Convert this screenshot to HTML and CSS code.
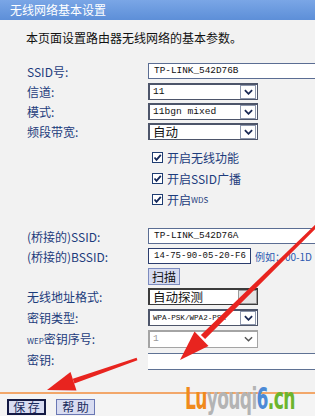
FILE: index.html
```html
<!DOCTYPE html>
<html lang="zh-CN">
<head>
<meta charset="UTF-8">
<title>无线网络基本设置</title>
<link rel="stylesheet" href="styles.css">
</head>
<body>

<div class="page">
    <div class="title">无线网络基本设置</div>
    <p class="intro">本页面设置路由器无线网络的基本参数。</p>

    <div class="form">
        <div class="row">
            <span class="lbl">SSID号:</span>
            <span class="field long">TP-LINK_542D76B</span>
        </div>
        <div class="row">
            <span class="lbl">信道:</span>
            <div class="sel"><span class="txt mono">11</span><span class="btn"><svg viewBox="0 0 10 6"><path d="M1 1 L5 5 L9 1"/></svg></span></div>
        </div>
        <div class="row">
            <span class="lbl">模式:</span>
            <div class="sel"><span class="txt mono">11bgn mixed</span><span class="btn"><svg viewBox="0 0 10 6"><path d="M1 1 L5 5 L9 1"/></svg></span></div>
        </div>
        <div class="row">
            <span class="lbl">频段带宽:</span>
            <div class="sel"><span class="txt cjk">自动</span><span class="btn"><svg viewBox="0 0 10 6"><path d="M1 1 L5 5 L9 1"/></svg></span></div>
        </div>

        <div class="checks">
            <label class="chk"><span class="box"><svg viewBox="0 0 9 9"><path d="M1.5 4.5 L3.5 6.8 L7.8 1.8"/></svg></span>开启无线功能</label>
            <label class="chk"><span class="box"><svg viewBox="0 0 9 9"><path d="M1.5 4.5 L3.5 6.8 L7.8 1.8"/></svg></span>开启SSID广播</label>
            <label class="chk"><span class="box"><svg viewBox="0 0 9 9"><path d="M1.5 4.5 L3.5 6.8 L7.8 1.8"/></svg></span>开启<small>WDS</small></label>
        </div>

        <div class="row">
            <span class="lbl">(桥接的)SSID:</span>
            <span class="field long">TP-LINK_542D76A</span>
        </div>
        <div class="row">
            <span class="lbl">(桥接的)BSSID:</span>
            <span class="field short dark">14-75-90-05-20-F6</span>
            <span class="hint">例如：00-1D</span>
        </div>
        <div class="row">
            <span class="lbl"></span>
            <span class="scan">扫描</span>
        </div>
        <div class="row tall">
            <span class="lbl">无线地址格式:</span>
            <div class="sel heavy"><span class="txt cjk">自动探测</span><span class="btn blank"></span></div>
        </div>
        <div class="row tall">
            <span class="lbl">密钥类型:</span>
            <div class="sel"><span class="txt tiny">WPA-PSK/WPA2-PSK</span><span class="btn"><svg viewBox="0 0 10 6"><path d="M1 1 L5 5 L9 1"/></svg></span></div>
        </div>
        <div class="row tall">
            <span class="lbl"><small>WEP</small>密钥序号:</span>
            <div class="sel off"><span class="txt mono">1</span><span class="btn plain"><svg viewBox="0 0 10 6"><path d="M1 1 L5 5 L9 1"/></svg></span></div>
        </div>
        <div class="row tall">
            <span class="lbl">密钥:</span>
            <span class="keyfield"></span>
        </div>
    </div>

    <div class="footer">
        <span class="fbtn active">保 存</span>
        <span class="fbtn">帮 助</span>
    </div>

    <div class="mark"><span class="m-or">Lu</span><span class="m-gr">youqi</span><span class="m-bl">6</span><span class="m-gn">.cn</span></div>

    <svg class="arrows" viewBox="0 0 315 416">
        <polygon points="317.1,227.1 314.9,224.9 200.9,334.9 205.1,339.1"/>
        <polygon points="180,360 208.5,346 194.5,331.5"/>
        <polygon points="137.4,360.2 136.6,357.8 72.8,378.8 74.4,383.6"/>
        <polygon points="47,390 76.5,390.5 70.5,372"/>
    </svg>
</div>

</body>
</html>
```

FILE: styles.css
```css
/* router settings page */
body {
    margin: 0;
    background: #f2f2f2;
    font-family: "Noto Sans CJK SC", sans-serif;
    font-size: 12px;
}
.page {
    position: relative;
    width: 315px;
    height: 416px;
    overflow: hidden;
}
.title {
    height: 20px;
    line-height: 20px;
    padding-left: 10px;
    color: #fff;
    background: linear-gradient(#7aa6e6, #5d8fd8);
}
.intro {
    margin: 11px 0 0 26px;
    height: 14px;
    line-height: 14px;
    color: #111;
}
.form {
    margin-top: 16px;
}
.row {
    display: flex;
    align-items: center;
    height: 20px;
    white-space: nowrap;
}
.row.tall {
    height: 21px;
}
.lbl {
    flex: none;
    width: 121px;
    padding-left: 27px;
    color: #1d3c7c;
}
.lbl small, .chk small {
    font-size: 8px;
}
.field {
    flex: none;
    box-sizing: border-box;
    height: 16px;
    line-height: 14px;
    padding-left: 5px;
    background: #fff;
    border: 1px solid #5b6d93;
    font-family: "Liberation Mono", monospace;
    font-size: 9.4px;
    color: #111;
}
.field.long {
    width: 190px;
}
.field.short {
    width: 103px;
    font-size: 9px;
}
.field.dark {
    border-color: #2b3d6e;
}
.hint {
    margin-left: 4px;
    font-size: 10px;
    color: #2a58b0;
}
.sel {
    flex: none;
    display: flex;
    box-sizing: border-box;
    width: 110px;
    height: 17px;
    background: #fff;
    border: 1px solid #4d556a;
    border-width: 2px 1px 1px 2px;
}
.sel .txt {
    flex: 1;
    padding-left: 3px;
    line-height: 14px;
    color: #111;
}
.mono {
    font-family: "Liberation Mono", monospace;
    font-size: 9.6px;
}
.sel .txt.cjk {
    font-size: 12.5px;
    line-height: 13px;
}
.sel .txt.tiny {
    overflow: hidden;
    font-family: "Liberation Mono", monospace;
    font-size: 7.6px;
}
.sel .btn {
    flex: none;
    display: flex;
    align-items: center;
    justify-content: center;
    box-sizing: border-box;
    width: 16px;
    height: 14px;
    margin-right: 1px;
    border: 1px solid #8c96ac;
    background: #fff;
}
.sel .btn svg {
    width: 9px;
    height: 6px;
    fill: none;
    stroke: #1b2a55;
    stroke-width: 2;
}
.sel.heavy {
    border-color: #3b3b3b;
}
.sel .btn.blank {
    width: 19px;
    margin-right: 0;
    background: #e4e4e4;
    border-color: #9a9a9a;
}
.sel.off {
    height: 18px;
    border-color: #a4a4a4;
}
.sel.off .txt {
    color: #9a9a9a;
}
.sel .btn.plain {
    border: none;
}
.sel .btn.plain svg {
    stroke: #555;
    stroke-width: 1.6;
}
.checks {
    margin: 6px 0 16px 152px;
}
.chk {
    display: flex;
    align-items: center;
    height: 21px;
    color: #1d3c7c;
}
.box {
    display: flex;
    box-sizing: border-box;
    width: 11px;
    height: 11px;
    margin-right: 4px;
    background: #fff;
    border: 1px solid #1f3d72;
}
.box svg {
    width: 9px;
    height: 9px;
    fill: none;
    stroke: #14285a;
    stroke-width: 1.8;
}
.scan {
    box-sizing: border-box;
    height: 17px;
    line-height: 15px;
    padding: 0 3px;
    margin-top: 1px;
    background: #d6dbf0;
    border: 1px solid #7c8bbf;
    color: #111;
}
.keyfield {
    flex: none;
    box-sizing: border-box;
    width: 170px;
    height: 17px;
    margin-top: 3px;
    background: #fff;
    border-top: 1px solid #5f7294;
    border-bottom: 1px solid #5f7294;
}
.footer {
    position: absolute;
    left: 0;
    right: 0;
    top: 392px;
    bottom: 0;
    display: flex;
    gap: 10px;
    padding: 5px 0 0 7px;
    border-top: 2px solid #f2a76a;
    background: #f4f4f4;
}
.fbtn {
    box-sizing: border-box;
    width: 39px;
    height: 16px;
    line-height: 14px;
    text-align: center;
    background: #d8dcf1;
    border: 1px solid #6a78b4;
    color: #1a2a5c;
}
.fbtn.active {
    border: 2px solid #141a44;
    line-height: 12px;
}
.mark {
    position: absolute;
    left: 185px;
    top: 381px;
    font-family: "DejaVu Sans Condensed", "DejaVu Sans", sans-serif;
    font-weight: bold;
    font-size: 28px;
    letter-spacing: -1px;
    transform: scale(0.68, 1.08);
    transform-origin: left top;
}
.m-or { color: #f08a1c; }
.m-gr { color: #b4b4b4; }
.m-bl { color: #4c8ad6; }
.m-gn { color: #6cb52c; }
.arrows {
    position: absolute;
    left: 0;
    top: 0;
    width: 315px;
    height: 416px;
    pointer-events: none;
    fill: #e8241f;
}
```
